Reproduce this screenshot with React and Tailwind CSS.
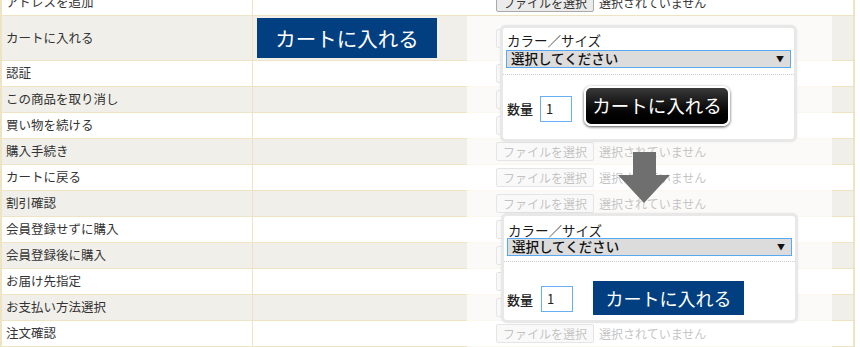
import React from 'react';

const rows = [
  { label: 'アドレスを追加' },
  { label: 'カートに入れる', cart: true },
  { label: '認証' },
  { label: 'この商品を取り消し' },
  { label: '買い物を続ける' },
  { label: '購入手続き' },
  { label: 'カートに戻る' },
  { label: '割引確認' },
  { label: '会員登録せずに購入' },
  { label: '会員登録後に購入' },
  { label: 'お届け先指定' },
  { label: 'お支払い方法選択' },
  { label: '注文確認' },
];

function FileInput() {
  return (
    <div className="flex items-center gap-[5px] text-[12px] leading-none text-[#333]">
      <span className="h-[19px] px-[6px] flex items-center border border-[#a9a9a9] bg-[#ebebeb] rounded-[2px]">
        ファイルを選択
      </span>
      <span>選択されていません</span>
    </div>
  );
}

function SelectBox() {
  return (
    <div className="h-[18px] flex items-center justify-between border border-[#59a8f2] bg-[#dcdcdc] pl-[4px] pr-[6px] text-[13.5px] font-medium leading-none text-[#111]">
      <span>選択してください</span>
      <span className="text-[8px]">▼</span>
    </div>
  );
}

function QtyInput() {
  return (
    <div className="w-[32px] h-[26px] border border-[#6aaef2] bg-white flex items-center pl-[5px] text-[13px] text-[#222]">
      1
    </div>
  );
}

export default function App() {
  return (
    <div className="relative w-[860px] h-[347px] overflow-hidden bg-white font-['Noto_Sans_CJK_JP','Liberation_Sans',sans-serif]">
      {/* table */}
      <div className="-mt-[10px] w-[855px] border-l-2 border-r-2 border-[#eee3c3]">
        {rows.map((r, i) => (
          <div key={r.label}
            className={`flex border-b border-[#eee3c3] ${r.cart ? 'h-[45px]' : 'h-[26px]'} ${i % 2 ? 'bg-[#f0efea]' : 'bg-white'}`}>
            <div className="w-[251px] shrink-0 border-r border-[#eee3c3] flex items-center pl-[4px] text-[12.5px] text-[#333]">
              {r.label}
            </div>
            <div className="flex-1 flex items-center pl-[4px]">
              <div className="w-[239px] shrink-0">
                {r.cart && (
                  <div className="w-[180px] h-[40px] bg-[#013f81] text-white text-[20.5px] flex items-center justify-center">
                    カートに入れる
                  </div>
                )}
              </div>
              <FileInput />
            </div>
          </div>
        ))}
      </div>

      {/* faded layer over the file inputs */}
      <div className="absolute left-[467px] top-[16px] w-[365px] h-[331px] bg-white/70" />

      {/* before */}
      <div className="absolute left-[500px] top-[25px] w-[297px] h-[117px] rounded-[6px] border-[3px] border-[#e8e8e8] bg-white shadow-[0_0_2px_rgba(0,0,0,0.08)]">
        <div className="px-[3px] pt-[5px]">
          <div className="pl-[1px] text-[13.5px] leading-[15px] text-[#1a1a1a]">カラー／サイズ</div>
          <div className="mt-[2px]"><SelectBox /></div>
        </div>
        <div className="mt-[6px] border-t border-dotted border-[#d0d0d0]" />
        <div className="flex items-start pl-[4px] pt-[11px]">
          <span className="mt-[15px] text-[13px] font-medium leading-[15px] text-[#222]">数量</span>
          <div className="ml-[7px] mt-[10px]"><QtyInput /></div>
          <div className="ml-[12px] w-[146px] h-[40px] rounded-[7px] border-2 border-white bg-linear-to-b from-[#3a3a3a] via-[#111] to-black shadow-[0_1px_3px_rgba(0,0,0,0.7)] text-white text-[18.5px] flex items-center justify-center">
            カートに入れる
          </div>
        </div>
      </div>

      {/* arrow */}
      <svg className="absolute left-[618px] top-[152px]" width="52" height="52" viewBox="0 0 52 52">
        <path d="M15 0 H38 V23 H52 L26 51 L0 23 H15 Z" fill="#6f6f6f" />
      </svg>

      {/* after */}
      <div className="absolute left-[501px] top-[213px] w-[297px] h-[110px] rounded-[6px] border-[3px] border-[#e8e8e8] bg-white shadow-[0_0_2px_rgba(0,0,0,0.08)]">
        <div className="px-[3px] pt-[7px]">
          <div className="pl-[1px] text-[13.5px] leading-[15px] text-[#1a1a1a]">カラー／サイズ</div>
          <SelectBox />
        </div>
        <div className="mt-[5px] border-t border-dotted border-[#d0d0d0]" />
        <div className="flex items-start pl-[3px] pt-[19px]">
          <span className="mt-[11px] text-[13px] font-medium leading-[15px] text-[#222]">数量</span>
          <div className="ml-[8px] mt-[5px]"><QtyInput /></div>
          <div className="ml-[20px] w-[151px] h-[34px] bg-[#013f81] text-white text-[18px] flex items-center justify-center">
            カートに入れる
          </div>
        </div>
      </div>
    </div>
  );
}
